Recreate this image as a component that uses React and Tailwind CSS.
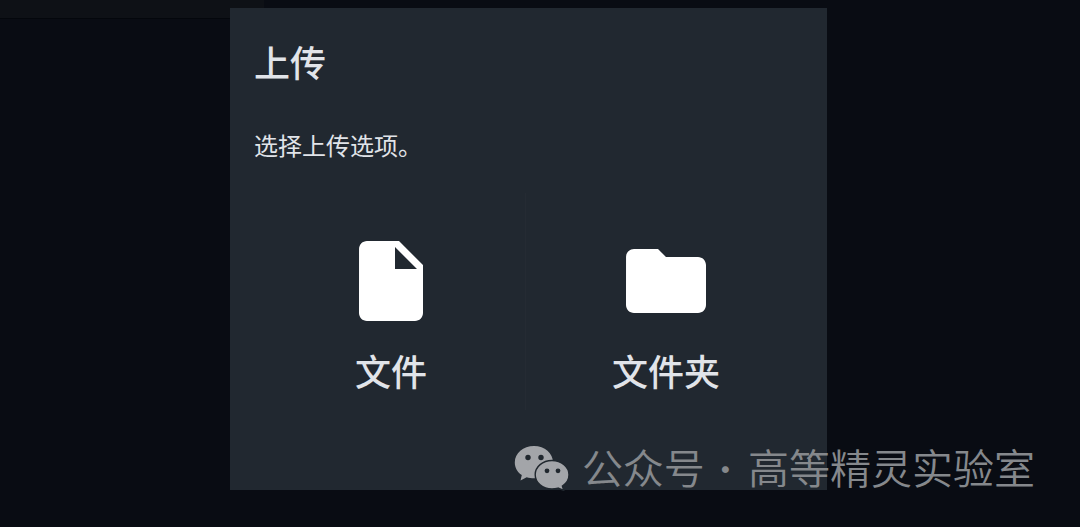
import { MdFolder, MdInsertDriveFile } from 'react-icons/md';

const options = [
  { id: 'file', label: '文件', Icon: MdInsertDriveFile },
  { id: 'folder', label: '文件夹', Icon: MdFolder },
];

function WeChatLogo() {
  return (
    <svg viewBox="0 0 56 46" className="w-14 shrink-0" aria-hidden="true">
      <path
        fill="#a3a5a9"
        d="M20 1C9.200 1 .8 8.200 .8 17.400c0 5.200 2.700 9.700 7 12.600L6.500 35.500l6.200-3.200c2.300.7 4.700 1 7.500 1C30.500 33.300 39 26.500 39 17.400 39 8.200 30.800 1 20 1z"
      />
      <circle cx="14" cy="12.500" r="2.700" fill="#20272e" />
      <circle cx="27" cy="12.500" r="2.700" fill="#20272e" />
      <path
        fill="#a3a5a9"
        stroke="#20272e"
        strokeWidth="1.400"
        d="M38 15.500c-9.400 0-16.800 6.200-16.800 14.200S28.600 43.900 38 43.900c2.200 0 4.200-.3 6-.8l5.800 2.400-1.400-4.500c4-2.600 6.600-6.600 6.600-11.300C55 21.700 47.400 15.500 38 15.500z"
      />
      <circle cx="33" cy="25.800" r="2.400" fill="#20272e" />
      <circle cx="44" cy="25.800" r="2.400" fill="#20272e" />
    </svg>
  );
}

function UploadDialog() {
  return (
    <div
      role="dialog"
      aria-labelledby="upload-title"
      className="w-full max-w-[597px] pb-20 bg-[#212830] text-[#e1e4e9]"
    >
      <h1 id="upload-title" className="px-6 pt-[29px] text-4xl leading-12 font-medium">
        上传
      </h1>
      <p className="px-6 pt-10 text-2xl leading-10">选择上传选项。</p>

      {/* Upload choices */}
      <div className="flex mt-7 pl-[26px] pr-[21px]">
        {options.map(({ id, label, Icon }) => (
          <button
            key={id}
            type="button"
            className="flex flex-auto flex-col items-center pt-10 pb-4 border-l border-transparent last:border-[#252b33] cursor-pointer"
          >
            <Icon className="size-24 text-white" />
            <span className="mt-[17px] text-4xl leading-12 font-medium">{label}</span>
          </button>
        ))}
      </div>
    </div>
  );
}

function App() {
  return (
    <div className="relative min-h-screen overflow-hidden bg-[#090c13] font-['Noto_Sans_CJK_SC',sans-serif]">
      <div className="w-[264px] h-[19px] bg-[#0e1116] border-b border-[#04070c]" />

      {/* Modal layer */}
      <div className="absolute inset-0 flex items-start justify-center pt-2 pr-[23px]">
        <UploadDialog />
      </div>

      {/* Account mark */}
      <div className="absolute right-[45px] bottom-7 flex items-center gap-3 text-[41px] leading-15 text-[#85888c] whitespace-nowrap">
        <WeChatLogo />
        <span className="font-[350]">
          公众号
          <span className="pl-1 pr-1.5 font-[Inter,sans-serif] font-bold"> · </span>
          高等精灵实验室
        </span>
      </div>
    </div>
  );
}

export default App;
